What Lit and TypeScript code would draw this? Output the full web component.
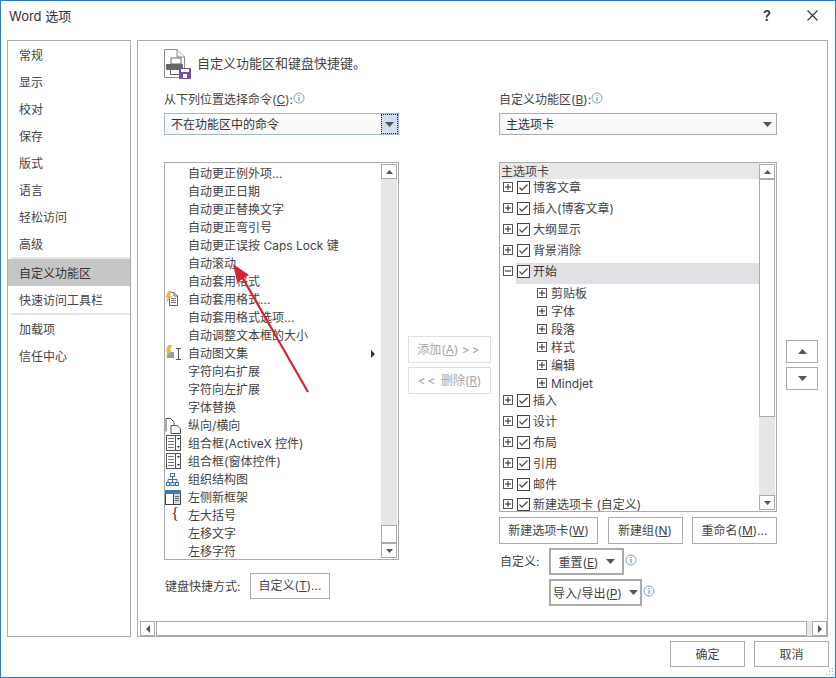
import { LitElement, html, css, svg } from "lit";
import { customElement } from "lit/decorators.js";

const info = html`<svg class="info" width="12" height="12" viewBox="0 0 12 12"><circle cx="6" cy="6" r="5" fill="#fff" stroke="#7f9fd0"/><rect x="5.5" y="5" width="1" height="4" fill="#5b7fb8"/><rect x="5.5" y="3" width="1" height="1" fill="#5b7fb8"/></svg>`;
const tri = (up = false) => html`<svg class="tri" width="9" height="5" viewBox="0 0 9 5"><path d="${up ? "M0 5L4.5 0L9 5Z" : "M0 0L4.5 5L9 0Z"}" fill="#555"/></svg>`;
const bolt = svg`<path d="M3 0L7 0L5 5L7 5L1 12L2.500 6.500L.5 6.500Z" fill="#e8b75a"/>`;
const combo = html`<svg width="18" height="18" viewBox="0 0 18 18"><rect x="1.500" y=".5" width="14" height="15" fill="#fff" stroke="#555"/><path d="M3 3.500h6M3 6.500h6M3 9.500h6M3 12.500h6" stroke="#777"/><rect x="10.500" y=".5" width="5" height="15" fill="#fff" stroke="#555"/><path d="M12 3h3L13.500 5ZM12 11h3L13.500 13Z" fill="#333"/></svg>`;

const icons: Record<string, unknown> = {
  docbolt: html`<svg width="18" height="18" viewBox="0 0 18 18"><path d="M4.500 1.500H9L12.500 5V14.500H4.500Z" fill="#fff" stroke="#666"/><path d="M9 1.500V5H12.500" fill="none" stroke="#666"/><path d="M6 7.500h5M6 9.500h5M6 11.500h5" stroke="#777"/>${bolt}</svg>`,
  textbolt: html`<svg width="18" height="18" viewBox="0 0 18 18"><rect x="2" y="7" width="7" height="6" fill="#999"/><path d="M11 3.500h5M11 14.500h5M13.500 3.500v11" stroke="#555" fill="none"/>${bolt}</svg>`,
  page: html`<svg width="18" height="18" viewBox="0 0 18 18"><path d="M1 14.500V1.500H5.500L9 5V8" fill="none" stroke="#555"/><path d="M6 8.500H12L15.500 11.500V16.500H6Z" fill="#fff" stroke="#555"/></svg>`,
  combo,
  org: html`<svg width="18" height="16" viewBox="0 0 18 16"><g fill="#fff" stroke="#3a6ea5"><rect x="5.500" y="1.500" width="4" height="3"/><rect x="1.500" y="10.500" width="3" height="3"/><rect x="6" y="10.500" width="3" height="3"/><rect x="10.500" y="10.500" width="3" height="3"/></g><path d="M7.500 4.500v6M3 10.500V7.500h9v3" fill="none" stroke="#3a6ea5"/></svg>`,
  frame: html`<svg width="18" height="16" viewBox="0 0 18 16"><rect x=".5" y=".5" width="15" height="14" fill="#fff" stroke="#444"/><rect x="0" y="0" width="16" height="4" fill="#3f79ad"/><rect x="8" y="4" width="7" height="10" fill="#d3dbe4"/><path d="M8.500 4v10" stroke="#444"/><path d="M10 6.500h4M10 8.500h4M10 10.500h4" stroke="#666"/></svg>`,
  brace: html`<span class="brace">{</span>`,
};

const commands: [string, string?, boolean?][] = [
  ["自动更正例外项..."], ["自动更正日期"], ["自动更正替换文字"], ["自动更正弯引号"], ["自动更正误按 Caps Lock 键"], ["自动滚动"], ["自动套用格式"],
  ["自动套用格式...", "docbolt"], ["自动套用格式选项..."], ["自动调整文本框的大小"], ["自动图文集", "textbolt", true], ["字符向右扩展"], ["字符向左扩展"], ["字体替换"],
  ["纵向/横向", "page"], ["组合框(ActiveX 控件)", "combo"], ["组合框(窗体控件)", "combo"], ["组织结构图", "org"], ["左侧新框架", "frame"], ["左大括号", "brace"], ["左移文字"], ["左移字符"],
];

const tree: [string, number][] = [
  ["博客文章", 0], ["插入(博客文章)", 0], ["大纲显示", 0], ["背景消除", 0], ["开始", 2],
  ["剪贴板", 1], ["字体", 1], ["段落", 1], ["样式", 1], ["编辑", 1], ["Mindjet", 1],
  ["插入", 0], ["设计", 0], ["布局", 0], ["引用", 0], ["邮件", 0], ["新建选项卡 (自定义)", 0],
];

const nav: [string, string?][] = [
  ["常规"], ["显示"], ["校对"], ["保存"], ["版式"], ["语言"], ["轻松访问"], ["高级", "sep"], ["自定义功能区", "sel"], ["快速访问工具栏", "sep"], ["加载项"], ["信任中心"],
];

@customElement("app-root")
export class AppRoot extends LitElement {
  static styles = css`
    :host { display: block; width: 836px; height: 678px; box-sizing: border-box; border: 1px solid #2b7cc4; background: #fff; color: #444; font: 12px/16px Inter, "Noto Sans CJK SC", sans-serif; overflow: hidden; position: relative; }
    * { box-sizing: border-box; }
    u { text-decoration: underline; text-underline-offset: 1px; }
    .title { height: 39px; display: flex; align-items: center; padding: 0 0 10px 8px; font-size: 13px; color: #333; }
    .title .grow { flex: 1; }
    .help { width: 20px; font-size: 14px; text-align: center; color: #333; margin-right: 30px; font-weight: 600; }
    .close { margin-right: 17px; display: block; }
    .main { display: flex; gap: 6px; padding-left: 6px; height: 597px; }
    .side { width: 124px; border: 1px solid #ababab; }
    .nav { height: 27px; padding: 2px 0 0 11px; display: flex; align-items: center; }
    .nav.sel { background: #c6c6c6; color: #333; }
    .nav.sep { height: 29px; padding: 2px 0 2px 11px; position: relative; }
    .rule { position: absolute; left: 3px; right: 0; bottom: 0; height: 2px; background: #e6e6e6; }
    .panel { width: 691px; border: 1px solid #ababab; display: flex; flex-direction: column; }
    .body { flex: 1; padding: 8px 0 0 26px; }
    .head { display: flex; align-items: center; gap: 5px; height: 30px; font-size: 13px; color: #444; margin-bottom: 13px; }
    .head span { margin-bottom: 2px; }
    .grid { display: grid; grid-template-columns: 235px 100px 278px auto; }
    .label { height: 16px; display: flex; align-items: center; white-space: pre; }
    .label .info { margin: -4px 0 0 0; }
    .select { margin-top: 5px; height: 22px; border: 1px solid #ababab; background: linear-gradient(#fbfbfb, #f6f6f6); display: flex; align-items: center; justify-content: space-between; padding-left: 6px; color: #333; }
    .select span { margin-top: 2px; }
    .select.focus { border-color: #a6b8d0; }
    .select .arrow { width: 17px; height: 20px; display: flex; align-items: center; justify-content: center; }
    .select.focus .arrow { background: #d3deee; outline: 1px dotted #222; outline-offset: -1px; }
    .list { margin-top: 27px; border: 1px solid #ababab; display: flex; position: relative; }
    .left { height: 398px; }
    .right { height: 350px; }
    .rows { flex: 1; min-width: 0; overflow: hidden; }
    .left .rows { padding-top: 2px; }
    .cmd { height: 18px; display: flex; align-items: center; padding-left: 23px; position: relative; white-space: pre; }
    .cmd .icon { position: absolute; left: 0; top: 0; width: 18px; height: 18px; display: flex; align-items: center; justify-content: center; }
    .brace { font: 16px/18px "Liberation Serif", serif; color: #333; margin-top: -4px; margin-left: 2px; }
    .cmd .sub { position: absolute; right: 6px; top: 5px; border-left: 4px solid #333; border-top: 4px solid transparent; border-bottom: 4px solid transparent; }
    .sb { width: 16px; margin: 1px 1px 1px 0; background: #e6e6e6; display: flex; flex-direction: column; }
    .sb-btn { height: 15px; flex: none; background: #fff; border: 1px solid #ababab; display: flex; align-items: center; justify-content: center; }
    .sb-btn .tri { width: 7px; height: 4px; }
    .thumb { background: #fff; border: 1px solid #ababab; flex: none; }
    .sb-gap { flex: 1; }
    .kb { margin-top: 13px; display: flex; align-items: center; height: 26px; padding-left: 1px; }
    .kb-name { width: 85px; flex: none; padding-top: 2px; }
    .btn { height: 26px; flex: none; background: #fff; border: 1px solid #ababab; display: flex; align-items: center; justify-content: center; color: #444; white-space: pre; gap: 0; }
    .kb .btn { width: 80px; }
    .mid { padding: 244px 0 0 9px; display: flex; flex-direction: column; gap: 4px; align-items: flex-start; }
    .mid .btn { width: 83px; height: 27px; color: #a6a6a6; border-color: #e0e0e0; }
    .sp { letter-spacing: 2px; }
    .mv { padding: 248px 0 0 9px; display: flex; flex-direction: column; gap: 4px; }
    .mv .btn { width: 32px; height: 23px; }
    .hdr { height: 16px; background: #e8e8e8; padding: 2px 0 0 1px; display: flex; align-items: center; color: #444; }
    .node { display: flex; align-items: center; height: 21px; white-space: pre; padding: 0 0 5px 3px; position: relative; }
    .node:last-child { height: 14px; padding-bottom: 0; }
    .node.child { height: 18px; padding: 0 0 0 37px; }
    .node.open::before { content: ""; position: absolute; left: 16px; right: 0; top: 0; bottom: 0; background: #e1e1e5; }
    .pm { position: relative; width: 10px; height: 10px; flex: none; }
    .cb { position: relative; width: 13px; height: 13px; margin-left: 4px; flex: none; }
    .node span { position: relative; margin: 2px 0 0 3px; line-height: 12px; }
    .node.child span { margin-left: 4px; }
    .node.open span { color: #333; }
    .tabs { margin-top: 5px; display: flex; justify-content: space-between; }
    .tabs .btn { height: 27px; }
    .custom { margin-top: 4px; padding-left: 1px; display: flex; flex-direction: column; gap: 4px; }
    .cr { display: flex; align-items: center; }
    .cr .name { width: 49px; flex: none; }
    .dd { height: 27px; border: 2px solid #ababab; display: flex; align-items: center; justify-content: center; gap: 7px; background: #fff; white-space: pre; color: #444; }
    .dd span { margin-top: 2px; }
    .cr .info { margin: -4px 0 0 1px; }
    .hs { height: 15px; display: flex; align-items: stretch; padding: 0 0 0 2px; background: #fff; flex: none; }
    .hs .sb-btn { width: 15px; height: 15px; }
    .hs .hthumb { width: 654px; border: 1px solid #ababab; background: #fff; margin-left: 1px; }
    .hs .htrack { width: 5px; background: #e6e6e6; }
    .foot { display: flex; justify-content: flex-end; gap: 9px; padding: 4px 6px 0 0; }
    .foot .btn { width: 75px; padding-top: 2px; }
    .grip { position: absolute; right: 1px; bottom: 1px; }
    .overlay { position: absolute; left: -1px; top: -1px; pointer-events: none; }
  `;

  pm(minus = false) {
    return html`<svg class="pm" viewBox="0 0 10 10"><rect x=".5" y=".5" width="9" height="9" fill="#fff" stroke="#555"/><path d="${minus ? "M2 5h6" : "M2 5h6M5 2v6"}" stroke="#222"/></svg>`;
  }
  cb() {
    return html`<svg class="cb" viewBox="0 0 13 13"><rect x=".5" y=".5" width="12" height="12" fill="#fff" stroke="#444"/><path d="M2.500 6.500L5 9.200L10.500 3.500" fill="none" stroke="#444" stroke-width="1.200"/></svg>`;
  }

  render() {
    return html`
      <div class="title">Word 选项<div class="grow"></div><div class="help">?</div>
        <svg class="close" width="11" height="11" viewBox="0 0 11 11"><path d="M.5 .5L10.500 10.500M10.500 .5L.5 10.500" stroke="#333" stroke-width="1.100"/></svg></div>
      <div class="main">
        <div class="side">
          ${nav.map(([t, k]) => html`<div class="nav ${k ?? ""}">${t}${k === "sep" ? html`<div class="rule"></div>` : ""}</div>`)}
        </div>
        <div class="panel">
          <div class="body">
            <div class="head">
              <svg width="28" height="30" viewBox="0 0 28 30">
                <path d="M.5 .5H13L20.500 8V28.500H.5Z" fill="#fff" stroke="#8a8a8a"/><path d="M13 .5V8H20.500" fill="#eee" stroke="#8a8a8a"/>
                <rect x="7" y="9" width="10" height="6" fill="#fff" stroke="#666"/><rect x="2" y="15" width="17" height="6" rx="1" fill="#666"/><rect x="6.500" y="20.500" width="9" height="5" fill="#fff" stroke="#666"/>
                <rect x="15" y="19" width="12" height="11" fill="#7b4f9e"/><rect x="17" y="20" width="8" height="3" fill="#fff"/><rect x="19" y="25" width="4" height="4" fill="#fff"/>
              </svg>
              <span>自定义功能区和键盘快捷键。</span>
            </div>
            <div class="grid">
              <div>
                <div class="label">从下列位置选择命令(<u>C</u>):${info}</div>
                <div class="select focus"><span>不在功能区中的命令</span><div class="arrow">${tri()}</div></div>
                <div class="list left">
                  <div class="rows">
                    ${commands.map(([t, ic, sub]) => html`<div class="cmd">${ic ? html`<div class="icon">${icons[ic]}</div>` : ""}${t}${sub ? html`<div class="sub"></div>` : ""}</div>`)}
                  </div>
                  <div class="sb"><div class="sb-btn">${tri(true)}</div><div class="sb-gap"></div><div class="thumb" style="height:18px"></div><div class="sb-btn">${tri()}</div></div>
                </div>
                <div class="kb"><div class="kb-name">键盘快捷方式:</div><div class="btn">自定义(<u>T</u>)...</div></div>
              </div>
              <div class="mid">
                <div class="btn">添加(<u>A</u>) <span class="sp">&gt;&gt;</span></div>
                <div class="btn"><span class="sp">&lt;&lt;</span> 删除(<u>R</u>)</div>
              </div>
              <div>
                <div class="label">自定义功能区(<u>B</u>):${info}</div>
                <div class="select"><span>主选项卡</span><div class="arrow">${tri()}</div></div>
                <div class="list right">
                  <div class="rows">
                    <div class="hdr">主选项卡</div>
                    ${tree.map(([t, k]) => html`<div class="node ${k === 1 ? "child" : ""} ${k === 2 ? "open" : ""}">${this.pm(k === 2)}${k !== 1 ? this.cb() : ""}<span>${t}</span></div>`)}
                  </div>
                  <div class="sb"><div class="sb-btn">${tri(true)}</div><div class="thumb" style="height:238px"></div><div class="sb-gap"></div><div class="sb-btn">${tri()}</div></div>
                </div>
                <div class="tabs">
                  <div class="btn" style="width:99px">新建选项卡(<u>W</u>)</div>
                  <div class="btn" style="width:75px">新建组(<u>N</u>)</div>
                  <div class="btn" style="width:85px">重命名(<u>M</u>)...</div>
                </div>
                <div class="custom">
                  <div class="cr"><div class="name">自定义:</div><div class="dd" style="width:75px"><span>重置(<u>E</u>)</span>${tri()}</div>${info}</div>
                  <div class="cr"><div class="name"></div><div class="dd" style="width:93px"><span>导入/导出(<u>P</u>)</span>${tri()}</div>${info}</div>
                </div>
              </div>
              <div class="mv">
                <div class="btn">${tri(true)}</div>
                <div class="btn">${tri()}</div>
              </div>
            </div>
          </div>
          <div class="hs">
            <div class="sb-btn"><svg width="4" height="8" viewBox="0 0 4 8"><path d="M4 0L0 4L4 8Z" fill="#555"/></svg></div>
            <div class="hthumb"></div><div class="htrack"></div>
            <div class="sb-btn"><svg width="4" height="8" viewBox="0 0 4 8"><path d="M0 0L4 4L0 8Z" fill="#555"/></svg></div>
          </div>
        </div>
      </div>
      <div class="foot"><div class="btn">确定</div><div class="btn">取消</div></div>
      <svg class="grip" width="10" height="10" viewBox="0 0 10 10"><path d="M8 2h1v1H8zM8 5h1v1H8zM5 5h1v1H5zM8 8h1v1H8zM5 8h1v1H5zM2 8h1v1H2z" fill="#aaa"/></svg>
      <svg class="overlay" width="836" height="678" viewBox="0 0 836 678">
        <path d="M308 392L241 275" stroke="#d8232f" stroke-width="2.200" fill="none"/>
        <path d="M233 264L249 275L237 282Z" fill="#d8232f"/>
      </svg>
    `;
  }
}
